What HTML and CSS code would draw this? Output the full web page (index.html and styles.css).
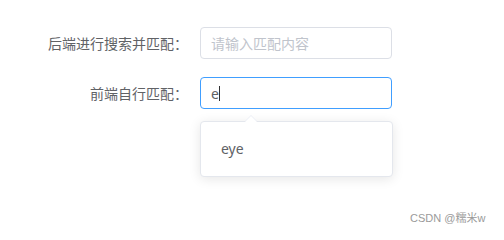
FILE: index.html
```html
<!DOCTYPE html>
<html lang="zh">
<head>
<meta charset="utf-8">
<link rel="stylesheet" href="styles.css">
</head>
<body>
<div class="form">
  <div class="form-item">
    <label class="label">后端进行搜索并匹配：</label>
    <div class="input">
      <span class="placeholder">请输入匹配内容</span>
    </div>
  </div>
  <div class="form-item">
    <label class="label">前端自行匹配：</label>
    <div class="field">
      <div class="input focused">
        <span class="value">e</span><span class="caret"></span>
      </div>
      <div class="popper">
        <span class="arrow"></span>
        <ul class="suggestions">
          <li class="suggestion">eye</li>
        </ul>
      </div>
    </div>
  </div>
</div>
<div class="watermark">CSDN @糯米w</div>
</body>
</html>
```
FILE: styles.css
```css
html, body {
  margin: 0;
  padding: 0;
  background: #ffffff;
  width: 504px;
  height: 235px;
  overflow: hidden;
  font-family: "Noto Sans CJK SC", "Liberation Sans", sans-serif;
}
.form {
  padding-top: 27px;
}
.form-item {
  display: flex;
  align-items: flex-start;
  margin-bottom: 18px;
}
.label {
  width: 200px;
  box-sizing: border-box;
  padding-right: 12px;
  text-align: right;
  font-size: 14px;
  line-height: 32px;
  color: #606266;
}
.field {
  position: relative;
}
.input {
  width: 192px;
  height: 32px;
  box-sizing: border-box;
  border: 1px solid #dcdfe6;
  border-radius: 4px;
  padding: 0 10px;
  display: flex;
  align-items: center;
  font-size: 14px;
}
.input.focused {
  border-color: #409eff;
}
.placeholder {
  color: #c0c4cc;
}
.value {
  color: #606266;
  font-family: "Noto Sans", "Liberation Sans", sans-serif;
}
.caret {
  display: inline-block;
  width: 1px;
  height: 15px;
  background: #303133;
  margin-left: 0;
}
.popper {
  position: absolute;
  top: 44px;
  left: 0;
  width: 193px;
  box-sizing: border-box;
  background: #fff;
  border: 1px solid #e4e7ed;
  border-radius: 4px;
  box-shadow: 0 2px 12px 0 rgba(0, 0, 0, 0.1);
}
.arrow {
  position: absolute;
  top: -6px;
  left: 44px;
  width: 0;
  height: 0;
  border-left: 6px solid transparent;
  border-right: 6px solid transparent;
  border-bottom: 6px solid #fff;
  filter: drop-shadow(0 -1px 0 #ebeef5);
}
.suggestions {
  list-style: none;
  margin: 0;
  padding: 10px 0;
}
.suggestion {
  padding: 0 20px;
  line-height: 34px;
  font-size: 14px;
  color: #606266;
  font-family: "Noto Sans", "Liberation Sans", sans-serif;
}
.watermark {
  position: absolute;
  left: 410px;
  top: 209px;
  font-family: "Liberation Sans", "Noto Sans CJK SC", sans-serif;
  font-size: 11px;
  color: #9a9a9a;
  white-space: nowrap;
}
```
